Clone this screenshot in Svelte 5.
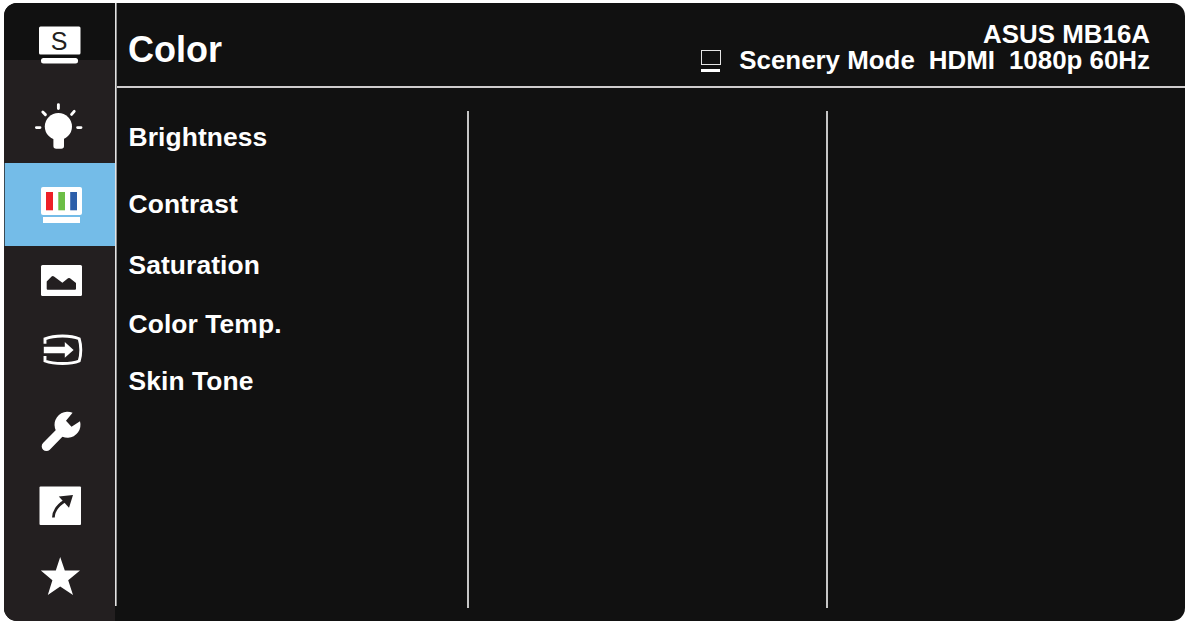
<script lang="ts">
	// top/height: the slot each icon takes in the sidebar
	const tabs = [
		{ id: 'splendid', top: 3, height: 77 },
		{ id: 'eyecare', top: 80, height: 83 },
		{ id: 'color', top: 163, height: 83 },
		{ id: 'image', top: 246, height: 69 },
		{ id: 'input', top: 315, height: 73 },
		{ id: 'setup', top: 388, height: 82 },
		{ id: 'shortcut', top: 470, height: 70 },
		{ id: 'favorite', top: 540, height: 81 }
	];

	const options = ['Brightness', 'Contrast', 'Saturation', 'Color Temp.', 'Skin Tone'];

	let active = $state('color');
</script>

<div class="osd">
	<nav>
		{#each tabs as tab}
			<button class:active={tab.id === active} aria-label={tab.id} onclick={() => (active = tab.id)}>
				<svg width="111" height={tab.height} viewBox="4 {tab.top} 111 {tab.height}" fill="#fff">
					{#if tab.id === 'splendid'}
						<rect x="39" y="26.5" width="41.5" height="28" rx="1.5" />
						<rect x="41" y="58" width="37" height="5.5" rx="2.5" />
						<text x="59" y="50" text-anchor="middle">S</text>
					{:else if tab.id === 'eyecare'}
						<circle cx="58.4" cy="126.5" r="13.6" />
						<path d="M53.4 136h10.6v10q0 2.8-2.8 2.8h-5q-2.8 0-2.8-2.8z" />
						<path
							d="M58.4 104.6v4M36.4 127.6h3.6M77.6 127.6h3.4M42.8 112l2.6 2.6M74.2 111.4l-2.6 3"
							stroke="#fff"
							stroke-width="2.9"
							stroke-linecap="round"
						/>
					{:else if tab.id === 'color'}
						<rect x="41" y="187" width="41" height="28" rx="2" />
						<rect x="43" y="217" width="37" height="6" />
						<rect x="46" y="192" width="7" height="18.3" fill="#ed2027" />
						<rect x="58.3" y="192" width="6.7" height="18.3" fill="#6cbe45" />
						<rect x="70.2" y="192" width="6.8" height="18.3" fill="#2c5faa" />
					{:else if tab.id === 'image'}
						<rect x="41" y="265" width="41" height="31" rx="1.5" />
						<path
							d="M46.7 281.4L51.6 276.4Q52.8 275.4 54 276.4L62.4 282.7L68 278.3Q69 277.5 70 278.3L76 282.9V288.7Q76 289.8 75 289.8H47.7Q46.7 289.8 46.7 288.7z"
							fill="#231f20"
						/>
					{:else if tab.id === 'input'}
						<path
							d="M45 343.8V338.8Q52 336 62.5 336Q73 336 79.2 338.8Q80.8 344 80.8 350Q80.8 356 79.2 361Q73 363.5 62.5 363.5Q52 363.5 45 361V356"
							fill="none"
							stroke="#fff"
							stroke-width="2.9"
						/>
						<path d="M43.8 346.8H64.8V342L73.6 350L64.8 357.8V353.2H43.8z" />
					{:else if tab.id === 'setup'}
						<path d="M72.6 412.8L66 420.7L71.5 426.7L80 421.2A13 13 0 1 1 72.6 412.8z" />
						<path d="M60 432.5L46.4 446.4" stroke="#fff" stroke-width="9.4" stroke-linecap="round" />
					{:else if tab.id === 'shortcut'}
						<rect x="39.5" y="486.5" width="41.5" height="38.5" rx="1" />
						<path d="M73 495L58.8 496.4L69 507.7z" fill="#231f20" />
						<path d="M53.4 517.5Q53.8 507.5 65.5 500.5" fill="none" stroke="#231f20" stroke-width="2.7" />
					{:else}
						<path
							d="M60.2 557L64.8 570.5H80L68.2 580.2L73 595L60.2 586.5L47.8 595L52.4 580.2L40.8 570.5H55.8z"
						/>
					{/if}
				</svg>
			</button>
		{/each}
	</nav>

	<main>
		<header>
			<h1>Color</h1>
			<div class="info">
				<div>ASUS MB16A</div>
				<div class="status">
					<svg width="20" height="23" viewBox="0 0 20 23">
						<rect x="0.5" y="0.5" width="19" height="14" fill="none" stroke="#e6e6e6" />
						<rect y="19" width="19" height="3" fill="#fff" />
					</svg>
					<span class="mode">Scenery Mode</span>
					<span class="source">HDMI</span>
					<span>1080p 60Hz</span>
				</div>
			</div>
		</header>

		<div class="columns">
			<ul>
				{#each options as option}
					<li>{option}</li>
				{/each}
			</ul>
			<div class="column"></div>
			<div class="column"></div>
		</div>
	</main>
</div>

<style>
	:global(body) {
		background: #fff;
	}

	.osd {
		display: flex;
		box-sizing: border-box;
		width: 1181px;
		height: 618px;
		margin: 3px 4px;
		overflow: hidden;
		border-radius: 13px;
		background: #111;
		color: #fff;
		font-family: 'Liberation Sans', Arial, sans-serif;
		font-weight: bold;
		font-size: 26px;
		line-height: 30px;
	}

	nav {
		width: 111px;
		background: linear-gradient(#111 57px, #231f20 57px);
	}

	button {
		display: block;
		width: 111px;
		padding: 0;
		border: 0;
		background: none;
	}

	button.active {
		background: #74bce8;
		box-shadow: inset 1px 0 #3a4a55;
	}

	svg {
		display: block;
	}

	text {
		font: 25px 'Liberation Sans', Arial, sans-serif;
		fill: #231f20;
	}

	main {
		flex: 1;
		display: flex;
		flex-direction: column;
		background: linear-gradient(#e4e4e4, #e4e4e4) 0 0 / 1.6px 603px no-repeat;
	}

	header {
		display: flex;
		justify-content: space-between;
		box-sizing: border-box;
		height: 85px;
		margin-left: 2px;
		padding: 0 35px 0 11px;
		border-bottom: 2px solid #cfcccd;
	}

	h1 {
		margin: 26px 0 0;
		font-size: 36px;
		line-height: 42px;
	}

	.info {
		margin-top: 18px;
		text-align: right;
		font-size: 25.9px;
		line-height: 26px;
	}

	.status {
		display: flex;
		justify-content: flex-end;
	}

	.status svg {
		margin: 3px 18px 0 0;
	}

	.mode {
		margin-right: 14px;
	}

	.source {
		margin-right: 14px;
	}

	.columns {
		flex: 1;
		display: grid;
		grid-template-columns: 352px 359px 1fr;
		padding: 23px 0 13px;
	}

	ul {
		display: grid;
		grid-template-rows: 67px 61px 59px 57px 30px;
		margin: 0;
		padding: 11px 0 0 13.5px;
		list-style: none;
		font-size: 26.4px;
		letter-spacing: 0.1px;
	}

	.column {
		border-left: 2px solid #c6c6c6;
	}
</style>
